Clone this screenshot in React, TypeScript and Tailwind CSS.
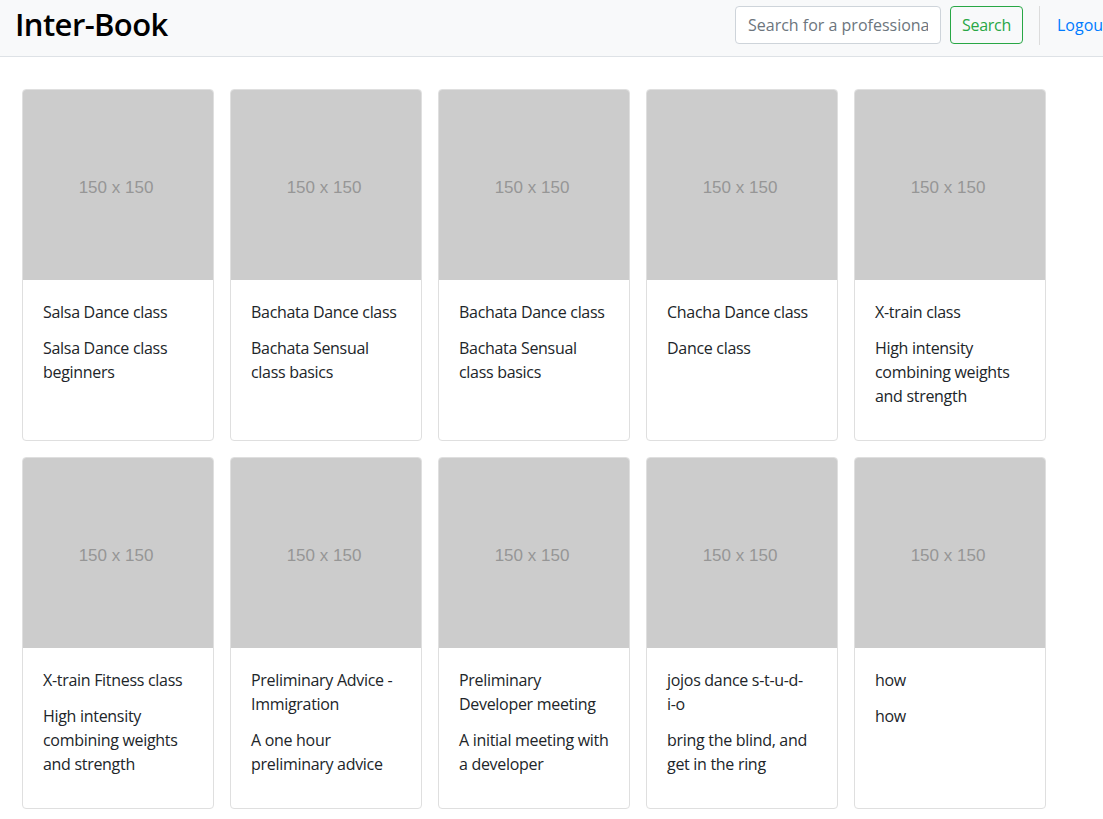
const services = [
  { title: 'Salsa Dance class', text: 'Salsa Dance class beginners' },
  { title: 'Bachata Dance class', text: 'Bachata Sensual class basics' },
  { title: 'Bachata Dance class', text: 'Bachata Sensual class basics' },
  { title: 'Chacha Dance class', text: 'Dance class' },
  { title: 'X-train class', text: 'High intensity combining weights and strength' },
  { title: 'X-train Fitness class', text: 'High intensity combining weights and strength' },
  { title: 'Preliminary Advice - Immigration', text: 'A one hour preliminary advice' },
  { title: 'Preliminary Developer meeting', text: 'A initial meeting with a developer' },
  // word joiner keeps "i-o" together, as the original wraps it
  { title: 'jojos dance s-t-u-d-i-\u2060o', text: 'bring the blind, and get in the ring' },
  { title: 'how', text: 'how' },
]

function Placeholder() {
  return (
    <div className="h-[190px] bg-[#cccccc] rounded-t-[3px] flex items-center justify-center pt-[6px]">
      <span className="text-[17px] text-[#969696] font-['Liberation_Sans',Arial,sans-serif] -ml-[4px]">150 x 150</span>
    </div>
  )
}

function ServiceCard({ title, text }: { title: string; text: string }) {
  return (
    <div className="border border-[#dfdfdf] rounded bg-white flex flex-col">
      <Placeholder />
      <div className="flex-1 pt-5 pl-5 pr-[18px] pb-8 text-[16px] leading-6 tracking-[-0.3px] text-[#212529]">
        <div className="mb-3">{title}</div>
        <p>{text}</p>
      </div>
    </div>
  )
}

export default function App() {
  return (
    <div className="min-h-screen bg-white overflow-hidden font-['Open_Sans',sans-serif]">
      <nav className="h-[57px] bg-[#f8f9fa] border-b border-[#dee2e6] flex items-center pl-[15px]">
        <h1 className="flex-1 text-[31px] font-semibold tracking-[-0.6px] text-black leading-none -mt-[8px]">
          Inter-Book
        </h1>
        <div className="w-[368px] shrink-0 flex items-center overflow-hidden -mt-[6px]">
          <input
            className="shrink-0 w-[206px] h-[38px] px-3 rounded border border-[#ced4da] bg-white text-[16px] placeholder:text-[#6c757d] outline-none"
            placeholder="Search for a professional"
          />
          <button className="shrink-0 ml-[9px] h-[38px] w-[73px] rounded border border-[#28a745] text-[#28a745] text-[16px] tracking-[-0.3px]">
            Search
          </button>
          <div className="shrink-0 ml-4 w-px h-[39px] bg-[#dcdcdc]" />
          <a className="shrink-0 ml-[17px] text-[16px] text-[#007bff] whitespace-nowrap">Logout</a>
        </div>
      </nav>
      <main className="pt-8 pl-[22px]">
        <div className="grid grid-cols-[repeat(5,192px)] gap-4">
          {services.map((s, i) => (
            <ServiceCard key={i} title={s.title} text={s.text} />
          ))}
        </div>
      </main>
    </div>
  )
}
